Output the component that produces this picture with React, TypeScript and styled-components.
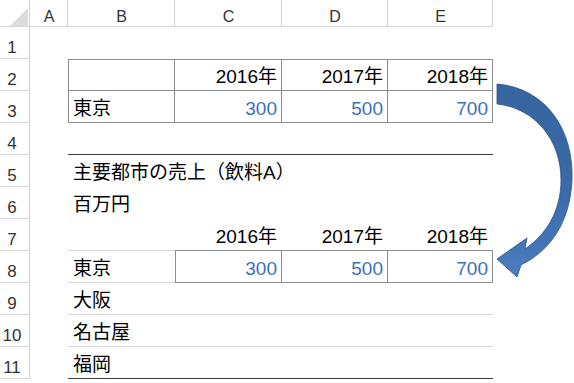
import styled, { createGlobalStyle } from "styled-components";

const GlobalStyle = createGlobalStyle`
  html, body {
    margin: 0;
    padding: 0;
    background: #ffffff;
  }
`;

const BOX = "#8c8c8c";
const DARK = "#3c3c3c";
const LIGHT = "#d4d4d4";

type Line = string | undefined;

interface CellSpec {
  text?: string;
  right?: boolean;
  blue?: boolean;
  t?: Line;
  r?: Line;
  b?: Line;
  l?: Line;
}

const Page = styled.div`
  position: relative;
  width: 574px;
  height: 383px;
  overflow: hidden;
  font-family: "Liberation Sans", "Noto Sans CJK JP", sans-serif;
`;

const Sheet = styled.div`
  display: grid;
  grid-template-columns: 30px 38px 107px 107px 106px 105px;
  grid-template-rows: 27px repeat(11, 32px);
`;

const Corner = styled.div`
  position: relative;
  box-shadow: inset -1px -1px 0 ${LIGHT};
`;

const CornerMark = styled.div`
  position: absolute;
  right: 2px;
  bottom: 1px;
  width: 0;
  height: 0;
  border-left: 18px solid transparent;
  border-bottom: 18px solid #dcdcdc;
`;

const ColHead = styled.div`
  display: flex;
  align-items: flex-end;
  justify-content: center;
  padding-bottom: 2px;
  box-sizing: border-box;
  font-size: 16px;
  line-height: 1;
  color: #333333;
  box-shadow: inset -1px -1px 0 ${LIGHT};
`;

const RowHead = styled.div`
  display: flex;
  align-items: flex-end;
  justify-content: center;
  padding: 0 6px 3px 0;
  box-sizing: border-box;
  font-size: 17px;
  line-height: 1;
  color: #333333;
  box-shadow: inset -1px -1px 0 ${LIGHT};
`;

const Cell = styled.div<{
  $right?: boolean;
  $blue?: boolean;
  $t?: Line;
  $r?: Line;
  $b?: Line;
  $l?: Line;
}>`
  display: flex;
  align-items: center;
  justify-content: ${(p) => (p.$right ? "flex-end" : "flex-start")};
  padding: 3px 5px 0 5px;
  box-sizing: border-box;
  font-size: 19px;
  line-height: 1;
  white-space: nowrap;
  overflow: visible;
  color: ${(p) => (p.$blue ? "#3f70b5" : "#000000")};
  box-shadow: ${(p) =>
    [
      p.$t && `inset 0 1px 0 ${p.$t}`,
      p.$r && `inset -1px 0 0 ${p.$r}`,
      p.$b && `inset 0 -1px 0 ${p.$b}`,
      p.$l && `inset 1px 0 0 ${p.$l}`,
    ]
      .filter(Boolean)
      .join(", ") || "none"};
`;

const ArrowLayer = styled.svg`
  position: absolute;
  left: 488px;
  top: 78px;
  pointer-events: none;
`;

const years = ["2016年", "2017年", "2018年"];
const values = ["300", "500", "700"];

const empty: CellSpec[] = [{}, {}, {}, {}, {}];
const line = (c: string): CellSpec[] => [{}, { b: c }, { b: c }, { b: c }, { b: c }];

const rows: CellSpec[][] = [
  empty,
  [
    {},
    { t: BOX, l: BOX, r: BOX, b: BOX },
    ...years.map((y) => ({ text: y, right: true, t: BOX, r: BOX, b: BOX })),
  ],
  [
    {},
    { text: "東京", l: BOX, r: BOX, b: BOX },
    ...values.map((v) => ({ text: v, right: true, blue: true, r: BOX, b: BOX })),
  ],
  line(DARK),
  [{}, { text: "主要都市の売上（飲料A）" }, {}, {}, {}],
  [{}, { text: "百万円" }, {}, {}, {}],
  [
    {},
    { b: LIGHT },
    ...years.map((y) => ({ text: y, right: true, b: BOX })),
  ],
  [
    {},
    { text: "東京", b: LIGHT },
    ...values.map((v, i) => ({
      text: v,
      right: true,
      blue: true,
      r: BOX,
      b: BOX,
      l: i === 0 ? BOX : undefined,
    })),
  ],
  line(LIGHT).map((c, i) => (i === 1 ? { ...c, text: "大阪" } : c)),
  line(LIGHT).map((c, i) => (i === 1 ? { ...c, text: "名古屋" } : c)),
  line(DARK).map((c, i) => (i === 1 ? { ...c, text: "福岡" } : c)),
];

function Arrow() {
  return (
    <ArrowLayer width="86" height="205" viewBox="488 78 86 205">
      <defs>
        <linearGradient id="arrowFill" x1="0" y1="0" x2="0" y2="1">
          <stop offset="0" stopColor="#36659f" />
          <stop offset="0.55" stopColor="#3a6aa8" />
          <stop offset="1" stopColor="#4a7dc0" />
        </linearGradient>
      </defs>
      <path
        d="M497,84 C546,88 574,130 572,180 C570,222 551,250 521,265 L517,277 L497,259 L527,238 L525,249 C547,234 561,210 561,180 C561,140 535,108 497,104 Z"
        fill="url(#arrowFill)"
        stroke="#2c568c"
        strokeWidth="0.8"
        strokeLinejoin="round"
      />
    </ArrowLayer>
  );
}

export default function App() {
  return (
    <Page>
      <GlobalStyle />
      <Sheet>
        <Corner>
          <CornerMark />
        </Corner>
        {["A", "B", "C", "D", "E"].map((c) => (
          <ColHead key={c}>{c}</ColHead>
        ))}
        {rows.map((cells, r) => [
          <RowHead key={`h${r}`}>{r + 1}</RowHead>,
          ...cells.map((c, i) => (
            <Cell
              key={`${r}-${i}`}
              $right={c.right}
              $blue={c.blue}
              $t={c.t}
              $r={c.r}
              $b={c.b}
              $l={c.l}
            >
              {c.text}
            </Cell>
          )),
        ])}
      </Sheet>
      <Arrow />
    </Page>
  );
}
